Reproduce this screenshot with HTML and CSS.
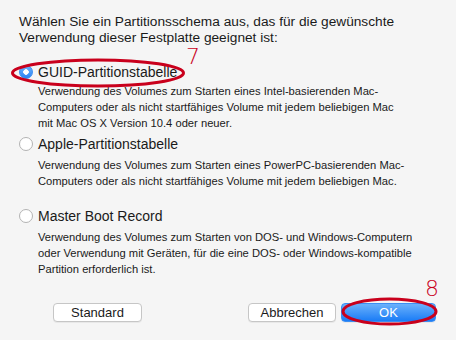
FILE: index.html
```html
<!DOCTYPE html>
<html lang="de">
<head>
  <meta charset="UTF-8" />
  <title>Partitionsschema</title>
  <link rel="stylesheet" href="styles.css">
</head>
<body>
  <div class="dialog">
    <p class="intro">Wählen Sie ein Partitionsschema aus, das für die gewünschte<br>Verwendung dieser Festplatte geeignet ist:</p>

    <div class="option first">
      <label class="choice"><span class="radio checked"></span>GUID-Partitionstabelle</label>
      <p class="desc">Verwendung des Volumes zum Starten eines Intel-basierenden Mac-<br>Computers oder als nicht startfähiges Volume mit jedem beliebigen Mac<br>mit Mac OS X Version 10.4 oder neuer.</p>
    </div>

    <div class="option second">
      <label class="choice"><span class="radio"></span>Apple-Partitionstabelle</label>
      <p class="desc">Verwendung des Volumes zum Starten eines PowerPC-basierenden Mac-<br>Computers oder als nicht startfähiges Volume mit jedem beliebigen Mac.</p>
    </div>

    <div class="option third">
      <label class="choice"><span class="radio"></span>Master Boot Record</label>
      <p class="desc">Verwendung des Volumes zum Starten von DOS- und Windows-Computern<br>oder Verwendung mit Geräten, für die eine DOS- oder Windows-kompatible<br>Partition erforderlich ist.</p>
    </div>

    <div class="buttons">
      <button class="btn std">Standard</button>
      <div class="right">
        <button class="btn cancel">Abbrechen</button>
        <button class="btn primary">OK</button>
      </div>
    </div>

    <!-- annotations -->
    <svg class="mark mark-guid" width="178" height="32" viewBox="0 0 178 32">
      <ellipse cx="89" cy="16" rx="85.5" ry="13" fill="none" stroke="#c9001c" stroke-width="3"/>
    </svg>
    <span class="num num-7">7</span>
    <svg class="mark mark-ok" width="100" height="32" viewBox="0 0 100 32">
      <ellipse cx="49.5" cy="15.5" rx="46.5" ry="12.5" fill="none" stroke="#c9001c" stroke-width="3"/>
    </svg>
    <span class="num num-8">8</span>
  </div>
</body>
</html>
```

FILE: styles.css
```css
body {
  margin: 0;
  background: #f5f5f5;
  font-family: "Liberation Sans", Arial, sans-serif;
  color: #1a1a1a;
}
.dialog {
  position: relative;
  width: 456px;
  height: 340px;
  box-sizing: border-box;
  padding: 14px 19px 0 19px;
}
.intro {
  margin: 0;
  font-size: 13.7px;
  line-height: 16px;
}
.option {
  margin-top: 17px;
}
.option.second {
  margin-top: 4px;
}
.option.third {
  margin-top: 18px;
}
.choice {
  display: flex;
  align-items: center;
  height: 18px;
  font-size: 14px;
}
.radio {
  width: 14px;
  height: 14px;
  box-sizing: border-box;
  border: 1px solid #b3b3b3;
  border-radius: 50%;
  background: #fff;
  margin-right: 5px;
  flex-shrink: 0;
}
.radio.checked {
  border-color: #3d8ef0;
  background: radial-gradient(circle, #fff 0 2.5px, transparent 3px), linear-gradient(#6cb2fb, #2b84f4);
}
.desc {
  margin: 2px 0 0 19px;
  font-size: 11.2px;
  line-height: 16px;
}
.second .desc,
.third .desc {
  margin-top: 4px;
}
.buttons {
  display: flex;
  justify-content: space-between;
  margin: 26px 0 0 34px;
  padding-right: 1px;
}
.right {
  display: flex;
  gap: 5px;
}
.btn {
  height: 19px;
  padding: 0;
  border: 1px solid #c6c6c6;
  border-radius: 4px;
  background: #fff;
  font-family: "Liberation Sans", Arial, sans-serif;
  font-size: 13px;
  color: #1a1a1a;
  box-shadow: 0 1px 0 rgba(0,0,0,0.05);
}
.std {
  width: 89px;
}
.cancel {
  width: 88px;
}
.btn.primary {
  width: 95px;
  border-color: #3b8ef3;
  color: #fff;
  background: linear-gradient(#6bb1fb, #1a7cf6);
}
.mark {
  position: absolute;
  pointer-events: none;
}
.mark-guid {
  left: 9px;
  top: 57px;
}
.mark-ok {
  left: 340px;
  top: 296px;
}
.num {
  position: absolute;
  color: #c9001c;
  font-family: "DejaVu Sans", sans-serif;
  font-weight: 200;
  font-size: 22px;
  line-height: 22px;
}
.num-7 {
  left: 186px;
  top: 46px;
}
.num-8 {
  left: 425px;
  top: 278px;
}
```
